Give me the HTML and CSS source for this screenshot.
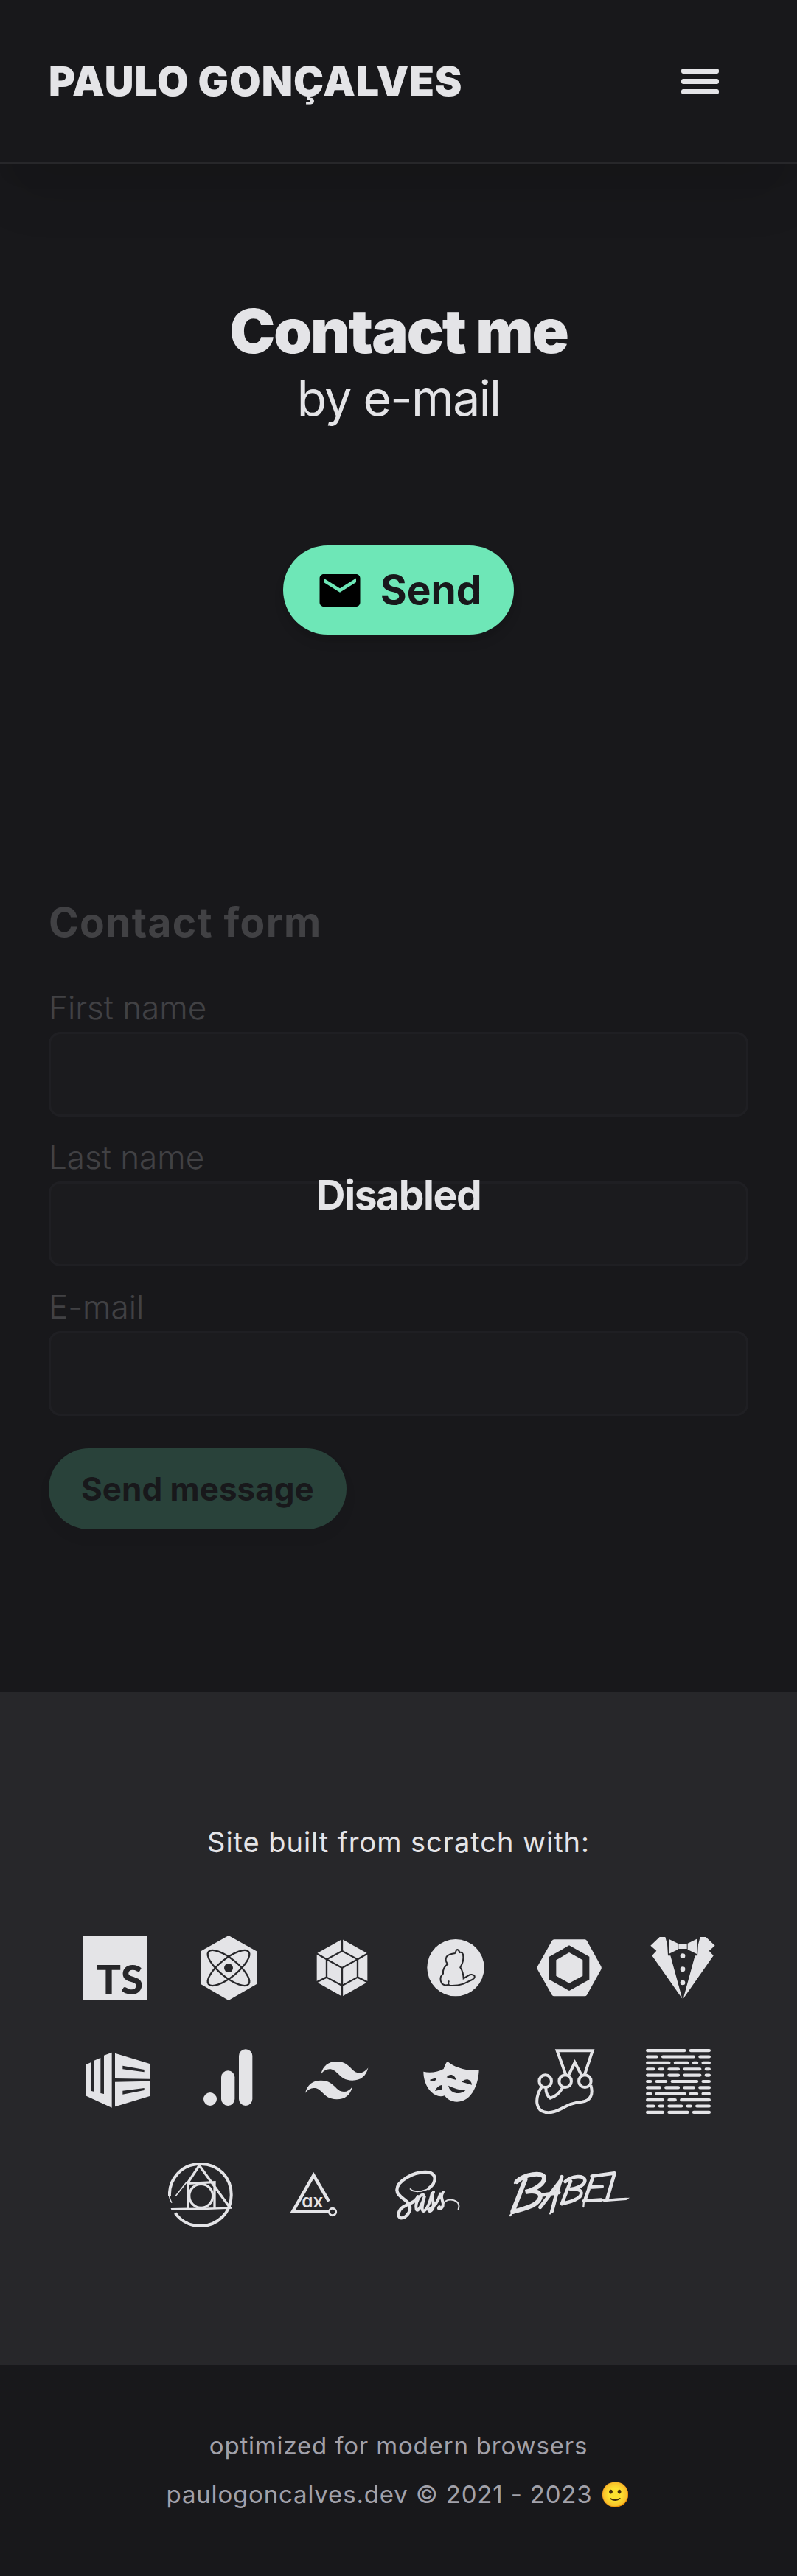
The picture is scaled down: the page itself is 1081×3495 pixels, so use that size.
FILE: index.html
```html
<!DOCTYPE html>
<html lang="en">
<head>
  <meta charset="utf-8">
  <meta name="viewport" content="width=device-width, initial-scale=1">
  <title>Contact – Paulo Gonçalves</title>
  <link rel="stylesheet" href="styles.css">
</head>
<body>
  <header class="site-header">
    <a class="brand" href="#">PAULO GONÇALVES</a>
    <button class="menu-button" type="button" aria-label="Open menu">
      <span class="menu-bar"></span>
      <span class="menu-bar"></span>
      <span class="menu-bar"></span>
    </button>
  </header>

  <main>
    <section class="hero">
      <h1 class="hero-title">Contact me</h1>
      <p class="hero-subtitle">by e-mail</p>
      <button class="button button-send" type="button">
        <svg class="mail-icon" viewBox="0 0 24 24" aria-hidden="true"><path d="M20 4H4c-1.100 0-1.990.9-1.990 2L2 18c0 1.100.9 2 2 2h16c1.100 0 2-.9 2-2V6c0-1.100-.9-2-2-2zm0 4l-8 5-8-5V6l8 5 8-5v2z"/></svg>
        <span>Send</span>
      </button>
    </section>

    <section class="form-section">
      <form class="contact-form">
        <h2 class="form-title">Contact form</h2>
        <div class="field">
          <label for="first-name">First name</label>
          <input id="first-name" type="text" disabled>
        </div>
        <div class="field">
          <label for="last-name">Last name</label>
          <input id="last-name" type="text" disabled>
        </div>
        <div class="field">
          <label for="email">E-mail</label>
          <input id="email" type="email" disabled>
        </div>
        <button class="button button-submit" type="submit" disabled>Send message</button>
      </form>
      <p class="form-notice">Disabled</p>
    </section>
  </main>

  <section class="stack">
    <p class="stack-title">Site built from scratch with:</p>
    <ul class="stack-list">
      <li>
        <svg class="logo" viewBox="0 0 264 264" role="img" aria-label="TypeScript">
          <rect width="264" height="264"/>
          <text class="ts-text" x="57" y="240">TS</text>
        </svg>
      </li>
      <li>
        <svg class="logo" viewBox="560 559 264 264" role="img" aria-label="React">
          <path d="M692 559L806 623V757L692 823L579 757V623Z"/>
          <g class="cut-line" stroke-width="7">
            <ellipse cx="692" cy="691" rx="105" ry="37" transform="rotate(39 692 691)"/>
            <ellipse cx="692" cy="691" rx="105" ry="37" transform="rotate(-39 692 691)"/>
          </g>
          <circle class="cut" cx="692" cy="691" r="18"/>
        </svg>
      </li>
      <li>
        <svg class="logo" viewBox="1022 559 264 264" role="img" aria-label="Webpack">
          <path d="M1154 574L1257 632V749L1154 807L1051 749V632Z"/>
          <g class="cut-line" stroke-width="7">
            <path d="M1154 622L1217 656V729L1154 763L1091 729V656Z"/>
            <path d="M1091 656L1154 691L1217 656M1154 691V812M1154 570V622M1217 656L1260 631M1217 729L1260 750M1091 656L1048 631M1091 729L1048 750"/>
          </g>
        </svg>
      </li>
      <li>
        <svg class="logo" viewBox="104 559 264 264" role="img" aria-label="Yarn">
          <circle cx="236" cy="690" r="116"/>
          <path class="cut-line" stroke-width="6" d="M235 631Q237 617 243 616Q249 617 252 628Q262 625 266 636Q271 662 255 689Q267 706 268 734Q282 725 293 719Q307 715 313 724Q315 733 303 739L268 756Q240 765 211 763Q203 756 209 743M211 763Q206 756 204 760Q193 764 181 756Q171 741 176 726L185 714Q182 691 204 675Q191 663 199 645Q208 634 235 631"/>
        </svg>
      </li>
      <li>
        <svg class="logo" viewBox="566 559 264 264" role="img" aria-label="Nx">
          <path d="M637 575H761Q767 575 770 580L828 685Q831 691 828 697L770 801Q767 806 761 806H637Q631 806 628 801L569 697Q566 691 569 685L628 580Q631 575 637 575Z"/>
          <path class="cut" d="M698 599L780 645V738L698 784L617 738V645Z"/>
          <path d="M698 628L753 659V723L698 753L645 723V659Z"/>
        </svg>
      </li>
      <li>
        <svg class="logo" viewBox="1028 559 264 264" role="img" aria-label="Standard">
          <path d="M1066 565H1089L1097 595L1100 641H1110L1158 816L1035 641L1053 621L1029 600Z"/>
          <path d="M1254 565H1231L1223 595L1220 641H1210L1162 816L1285 641L1267 621L1291 600Z"/>
          <path d="M1103 573L1140 591V616L1103 634ZM1217 573L1180 591V616L1217 634ZM1143 594H1177V613H1143Z"/>
          <circle cx="1160" cy="642" r="10"/><circle cx="1160" cy="696" r="10"/><circle cx="1160" cy="751" r="10"/>
        </svg>
      </li>
      <li>
        <svg class="logo" viewBox="114 120 258 264" role="img" aria-label="Web standards">
          <path d="M114 183L132 175V290L144 293V168L172 156V300L186 303V146L218 134V359L114 311Z"/>
          <path fill-rule="evenodd" d="M231 137L372 180V242L231 240ZM262 188V202L350 214V204ZM231 254L372 251V312L231 355ZM262 290V305L350 288V279Z"/>
        </svg>
      </li>
      <li>
        <svg class="logo" viewBox="571 120 237 264" role="img" aria-label="Google Analytics">
          <circle cx="619" cy="324" r="27"/>
          <rect x="664" y="208" width="55" height="143" rx="27"/>
          <rect x="736" y="121" width="55" height="230" rx="27"/>
        </svg>
      </li>
      <li>
        <svg class="logo" viewBox="0 0 24.75 24.75" role="img" aria-label="Tailwind CSS">
          <path d="M12.001 4.8c-3.2 0-5.2 1.6-6 4.8 1.2-1.6 2.6-2.2 4.2-1.8.913.228 1.565.89 2.288 1.624C13.666 10.618 15.027 12 18.001 12c3.2 0 5.2-1.6 6-4.8-1.2 1.6-2.6 2.2-4.2 1.8-.913-.228-1.565-.89-2.288-1.624C16.337 6.182 14.976 4.8 12.001 4.8zm-6 7.2c-3.2 0-5.2 1.6-6 4.8 1.2-1.6 2.6-2.2 4.2-1.8.913.228 1.565.89 2.288 1.624 1.177 1.194 2.538 2.576 5.512 2.576 3.2 0 5.2-1.6 6-4.8-1.2 1.6-2.6 2.2-4.2 1.8-.913-.228-1.565-.89-2.288-1.624C10.337 13.382 8.976 12 6.001 12z"/>
        </svg>
      </li>
      <li>
        <svg class="logo" viewBox="86 120 264 264" role="img" aria-label="Playwright">
          <path d="M105 212C130 219 165 214 187 201C192 190 196 175 203 171C235 198 290 212 331 204C330 255 305 335 242 335C215 335 200 322 191 310C155 322 124 290 112 255C107 240 105 225 105 212Z"/>
          <path class="cut" d="M130 246Q143 242 159 237Q157 249 145 252Q135 251 130 246ZM199 235Q208 223 220 225Q234 229 238 246ZM261 254Q272 242 285 244Q300 249 302 266ZM206 269Q240 286 276 289Q262 302 240 300Q212 295 206 269ZM152 291Q160 270 181 266L180 284Z"/>
        </svg>
      </li>
      <li>
        <svg class="logo" viewBox="548 120 264 264" role="img" aria-label="Jest">
          <g class="line" stroke-width="12">
            <path d="M684 224L649 127H793L761 224M696 226L721 175L748 226"/>
            <circle cx="601" cy="251" r="25"/><circle cx="682" cy="251" r="25"/><circle cx="762" cy="251" r="25"/>
            <path d="M586 274C556 322 558 378 613 379C663 379 680 340 750 335C785 331 797 304 786 268M603 278C603 300 610 312 621 320C645 312 660 298 671 277"/>
          </g>
        </svg>
      </li>
      <li>
        <svg class="logo" viewBox="0 0 21 21" role="img" aria-label="Prettier">
          <path class="line" stroke-width="1" stroke-linecap="round" d="M.5.5h12M14.500.5h6M.5 2.500h3M5.500 2.500h10M17.500 2.500h3M.5 4.500h7M9.500 4.500h4M15.500 4.500h1M18.500 4.500h2M.5 6.500h2M4.500 6.500h1M7.500 6.500h3M12.500 6.500h5M19.500 6.500h1M.5 8.500h5M7.500 8.500h3M12.500 8.500h5M19.500 8.500h1M.5 10.500h1M3.500 10.500h3M8.500 10.500h8M18.500 10.500h2M.5 12.500h4M6.500 12.500h4M12.500 12.500h3M17.500 12.500h3M.5 14.500h1M3.500 14.500h9M14.500 14.500h2M18.500 14.500h2M.5 16.500h5M7.500 16.500h2M11.500 16.500h9M.5 18.500h2M4.500 18.500h1M7.500 18.500h4M13.500 18.500h1M16.500 18.500h4M.5 20.500h5M7.500 20.500h6M15.500 20.500h5"/>
        </svg>
      </li>
      <li>
        <svg class="logo" viewBox="445 582 264 264" role="img" aria-label="PostCSS">
          <g class="line">
            <path stroke-width="12" d="M451 720C447 650 500 587 577 588C650 587 703 645 702 714C703 785 645 841 577 840C540 840 500 825 474 788"/>
            <path stroke-width="5" d="M449 708Q450 730 460 746M520 662L476 718"/>
            <path stroke-width="10" d="M524 666L572 594L698 768M526 768V667L634 662V768"/>
            <circle stroke-width="10" cx="579" cy="718" r="48"/>
          </g>
          <path d="M456 768L705 764V770L530 777L458 775Z"/>
        </svg>
      </li>
      <li>
        <svg class="logo" viewBox="904 582 264 264" role="img" aria-label="axe">
          <path class="line" stroke-width="13" d="M1096 740L1034 634L949 782H1096"/>
          <circle class="line" stroke-width="9" cx="1111" cy="783" r="14"/>
          <text class="axe-text" x="986" y="764">ax</text>
        </svg>
      </li>
      <li>
        <svg class="logo" viewBox="18 0 264 264" role="img" aria-label="Sass">
          <g class="line" stroke-linecap="round">
            <path stroke-width="13" d="M155 105C187 83 192 38 140 39C90 39 25 75 25 112C25 140 66 150 76 172C85 197 65 225 42 226C25 223 30 195 50 181C75 165 98 165 111 139"/>
            <path stroke-width="6" d="M80 108C90 121 130 121 155 105M213 168C222 155 235 150 250 152C272 156 282 170 275 190"/>
            <path stroke-width="12" d="M133 132C118 128 98 165 104 190C110 208 130 165 138 136C130 165 122 198 134 198C150 190 160 160 168 125M174 120C160 145 180 160 172 185C163 205 148 198 158 189C180 180 192 160 202 128M213 120C197 145 217 155 212 176C204 195 187 189 198 180"/>
          </g>
        </svg>
      </li>
      <li>
        <svg class="logo" viewBox="12 0 492 264" role="img" aria-label="Babel">
          <g class="line" stroke-linecap="round">
            <path stroke-width="18" d="M80 68L28 200M44 78C75 48 150 36 156 61C160 85 120 110 80 120C135 110 150 130 136 152C115 182 65 190 28 201"/>
            <path stroke-width="15" d="M228 58Q205 125 188 198M226 70L140 182M150 132L216 122"/>
            <path stroke-width="14" d="M264 76L228 168M242 78C270 52 322 50 322 74C320 95 285 106 258 110C300 104 317 116 302 138C282 158 250 162 230 168"/>
            <path stroke-width="14" d="M356 54L322 154M350 56L442 43M338 101L392 98M318 156L388 152M442 46L412 150"/>
            <path stroke-width="7" d="M410 152L490 147M18 216L30 200M318 156L316 180M36 84L50 76M180 208L190 190"/>
          </g>
          <path d="M380 150L504 143L490 153L400 160Z"/>
        </svg>
      </li>
    </ul>
  </section>

  <footer class="site-footer">
    <p>optimized for modern browsers</p>
    <p>paulogoncalves.dev © 2021 - 2023 🙂</p>
  </footer>
</body>
</html>
```
FILE: styles.css
```css
:root {
  --bg: #18181b;
  --surface: #27272a;
  --border: #3f3f46;
  --text: #e4e4e7;
  --muted: #a1a1aa;
  --accent: #6ee7b7;
}

*,
*::before,
*::after {
  box-sizing: border-box;
}

body,
h1,
h2,
p,
ul {
  margin: 0;
  padding: 0;
}

body {
  background: var(--bg);
  color: var(--text);
  font-family: Inter, "Noto Sans", sans-serif;
  font-size: 44px;
  line-height: 66px;
}

button,
input {
  font: inherit;
}

/* Header */
.site-header {
  display: flex;
  align-items: center;
  justify-content: space-between;
  padding: 44px 66px;
  border-bottom: 3px solid var(--surface);
  box-shadow: 0 55px 69px -14px rgba(0, 0, 0, 0.1), 0 28px 28px -14px rgba(0, 0, 0, 0.04);
}

.brand {
  color: inherit;
  font-size: 55px;
  font-weight: 900;
  line-height: 77px;
  letter-spacing: 1px;
  text-decoration: none;
}

.menu-button {
  display: flex;
  flex-direction: column;
  align-items: center;
  justify-content: center;
  gap: 7px;
  width: 132px;
  height: 132px;
  padding: 0;
  border: 0;
  background: none;
}

.menu-bar {
  width: 51px;
  height: 7px;
  border-radius: 3px;
  background: var(--text);
}

/* Hero */
.hero {
  display: flex;
  flex-direction: column;
  align-items: center;
  padding: 177px 66px 307px;
  text-align: center;
}

.hero-title {
  font-size: 83px;
  font-weight: 900;
  line-height: 98px;
  letter-spacing: -0.025em;
}

.hero-subtitle {
  margin-bottom: 158px;
  font-size: 66px;
  font-weight: 400;
  line-height: 84px;
  letter-spacing: -0.025em;
}

.button {
  border: 0;
  border-radius: 66px;
  background: var(--accent);
  color: var(--bg);
  font-weight: 700;
  box-shadow: 0 11px 17px -3px rgba(0, 0, 0, 0.1), 0 6px 11px -3px rgba(0, 0, 0, 0.06);
}

.button-send {
  display: flex;
  align-items: center;
  gap: 22px;
  padding: 22px 44px;
  font-size: 55px;
  line-height: 77px;
}

.mail-icon {
  width: 66px;
  height: 66px;
  fill: #000;
}

/* Contact form */
.form-section {
  display: grid;
  padding: 0 66px 221px;
}

.contact-form,
.form-notice {
  grid-area: 1 / 1;
}

.contact-form {
  padding-top: 45px;
  opacity: 0.2;
}

.form-title {
  margin-bottom: 44px;
  font-size: 55px;
  font-weight: 700;
  line-height: 77px;
  letter-spacing: 0.025em;
}

.field {
  display: flex;
  flex-direction: column;
  margin-bottom: 22px;
  font-weight: 300;
}

.field input {
  width: 100%;
  height: 115px;
  border: 3px solid var(--border);
  border-radius: 16px;
  background: var(--surface);
}

.button-submit {
  margin-top: 22px;
  padding: 22px 44px;
  line-height: 66px;
}

.form-notice {
  z-index: 1;
  place-self: center;
  font-size: 55px;
  font-weight: 700;
  line-height: 77px;
  letter-spacing: -0.025em;
}

/* Technology stack */
.stack {
  padding: 176px 66px 187px;
  background: var(--surface);
  text-align: center;
}

.stack-title {
  margin-bottom: 99px;
  font-size: 38px;
  line-height: 55px;
  letter-spacing: 0.025em;
}

.stack-list {
  display: flex;
  flex-wrap: wrap;
  justify-content: center;
  gap: 66px;
  list-style: none;
}

.logo {
  display: block;
  width: auto;
  height: 88px;
  fill: var(--text);
}

.cut {
  fill: var(--surface);
}

.cut-line {
  fill: none;
  stroke: var(--surface);
}

.line {
  fill: none;
  stroke: var(--text);
}

.ts-text {
  fill: var(--surface);
  font-family: Lato, sans-serif;
  font-size: 164px;
  font-weight: 900;
}

.axe-text {
  font-size: 73px;
  font-weight: 600;
  font-feature-settings: "cv11";
}

/* Footer */
.site-footer {
  padding: 76px 66px 78px;
  color: var(--muted);
  font-size: 33px;
  letter-spacing: 0.025em;
  text-align: center;
}
```
